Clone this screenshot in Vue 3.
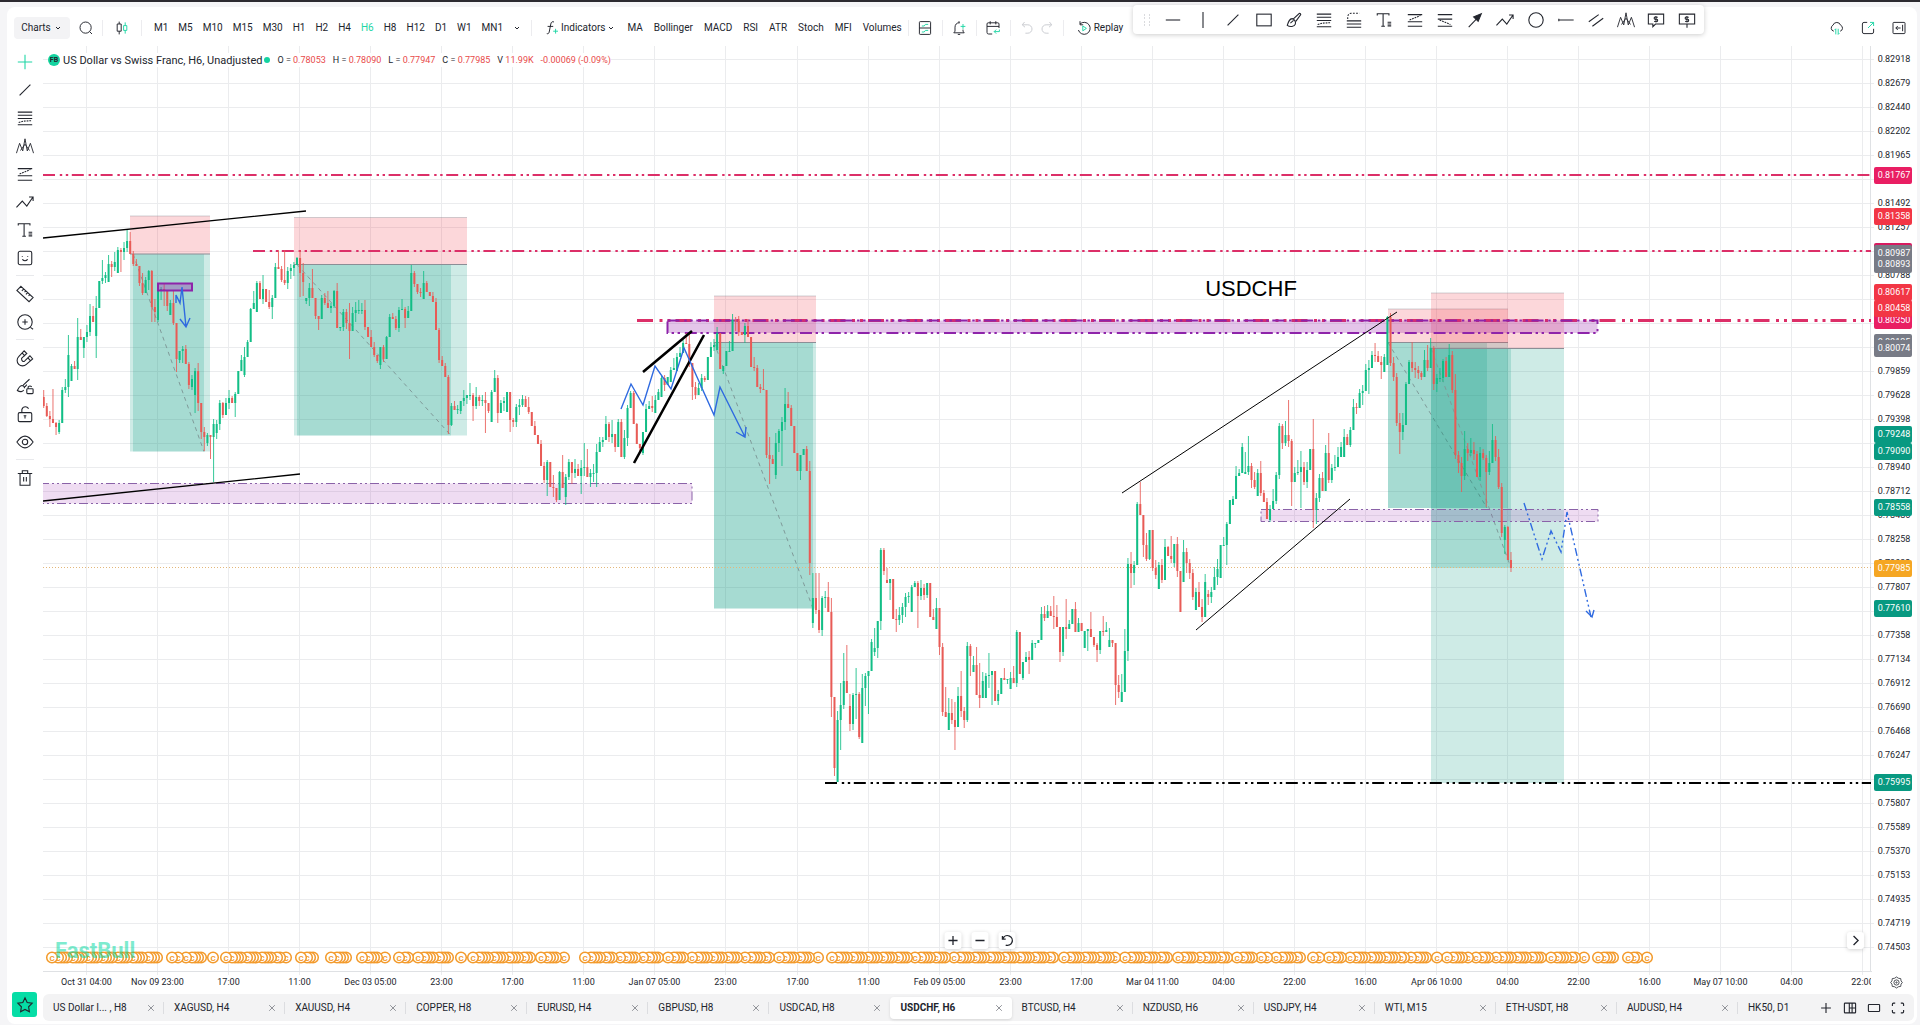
<script setup>
import { ref } from "vue";

const activeFrame = ref("H6");
const activeTab = ref("USDCHF, H6");

const frames = ["M1", "M5", "M10", "M15", "M30", "H1", "H2", "H4", "H6", "H8", "H12", "D1", "W1", "MN1"];
const studies = ["MA", "Bollinger", "MACD", "RSI", "ATR", "Stoch", "MFI", "Volumes"];

const tabs = [
  "US Dollar I... , H8", "XAGUSD, H4", "XAUUSD, H4", "COPPER, H8", "EURUSD, H4",
  "GBPUSD, H8", "USDCAD, H8", "USDCHF, H6", "BTCUSD, H4", "NZDUSD, H6",
  "USDJPY, H4", "WTI, M15", "ETH-USDT, H8", "AUDUSD, H4", "HK50, D1",
];

const quote = [
  { label: "O =", value: "0.78053" },
  { label: "H =", value: "0.78090" },
  { label: "L =", value: "0.77947" },
  { label: "C =", value: "0.77985" },
  { label: "V", value: "11.99K" },
  { label: "", value: "-0.00069 (-0.09%)" },
];

// Icon shapes, all on a 20x20 box
const G = 'stroke="#1fd6a5"';
const icons = {
  chevron: '<path d="M6 8l4 4 4-4"/>',
  search: '<circle cx="9.5" cy="9.5" r="7"/><path d="M14.500 14.500l3 3"/>',
  candles: `<path d="M6.500 2v3M6.500 14v4M4 5h5v9H4z"/><path ${G} d="M14 3v4M14 13v4M12 7h4v6h-4z"/>`,
  fx: `<path d="M12.500 2.500c-2-1-3.500 0-4 2.500L6.500 15c-.5 2-1.500 2.500-3 2M4.500 8h7"/><path ${G} d="M14.500 11v6M11.500 14h6"/>`,
  layout: `<rect x="3" y="2" width="14" height="16" rx="1"/><path d="M3 10h14"/><path ${G} d="M6 7.500h3l1.500-2H14M6 15h3l1.500-2H14"/>`,
  bell: `<path d="M11 3.500C7 3 5 6 5 9v5l-1.500 2h13L15 14v-2M8.500 18h3M10 1.500v2"/><path ${G} d="M15 5v6M12 8h6"/>`,
  calendar: `<path d="M9 17.500H4.500q-2 0-2-2V5q0-1.500 1.500-1.500h12q1.500 0 1.500 1.500v5M2.500 8h15M6.500 1.500v4M13.500 1.500v4"/><path ${G} d="M18 14.500h-6.500M14 12l-2.500 2.500L14 17M18 12v2.500"/>`,
  undo: '<path d="M7 2.500L4 6l3.500 3M4.500 6H11a5 5 0 0 1 0 10.500H8"/>',
  redo: '<path d="M13 2.500L16 6l-3.500 3M15.500 6H9a5 5 0 0 0 0 10.500h3"/>',
  replay: `<path d="M5 5A7.500 7.500 0 1 1 3 12.500M5 1.500V6h4"/><path ${G} d="M8.500 7.500l4.500 3-4.500 3z"/>`,
  cloud: `<path d="M6 14a4 4 0 0 1-1-7.500 5 5 0 0 1 9.500 0A4 4 0 0 1 14 14"/><path ${G} d="M8.500 18v-7L7 12.500M11.500 11v7l1.500-1.500"/>`,
  share: `<path d="M9 3H5q-2 0-2 2v10q0 2 2 2h10q2 0 2-2v-4"/><path ${G} d="M10 10l7-7M12.500 3H17v4.500"/>`,
  collapse: '<rect x="2.500" y="3" width="15" height="14" rx="1"/><path d="M14.500 6v8M12 10H6M8.500 7.500L6 10l2.500 2.500"/>',
  cross: `<path ${G} d="M10 2v16M2 10h16"/>`,
  line: '<path d="M4 16L16 4"/>',
  hline: '<path d="M2 10h16"/>',
  vline: '<path d="M10 1v18"/>',
  rect: '<rect x="2" y="3.500" width="16" height="13"/>',
  brush: '<path d="M9 9l7-6.500q1.500 0 1.500 1.500L12 11.500M8 8.500c-3 0-4 3-5.500 7.500 3 2 8 1.500 9-1.500.8-2.500-1-5.500-3.500-6zM6 13.500l3.500-3"/>',
  fib: '<path d="M2 3.500h16M2 7h16M2 10.500h16M2 17.500h16"/><path stroke-dasharray="2 1" d="M3 15l5-1.500 9-.5"/>',
  fibext: '<path d="M2 11h16M2 14.500h16M2 18h16"/><path stroke-dasharray="2 1.500" d="M3 9V6q1-3.500 4-3.500h9"/>',
  text: '<path d="M2.500 5V3h13v2M9 3v14M7 17h4M14 12.500h4M14 14.500h4M14 16.500h4"/>',
  channelup: '<path d="M2 4h16M2 12h16M2 17h16"/><path stroke-dasharray="2 1" d="M4 10l12-5"/>',
  channeldn: '<path d="M2 4h16M2 9h16M2 17h16"/><path stroke-dasharray="2 1" d="M4 10l12 5"/>',
  arrow: '<path d="M3 18l9-9.500"/><path fill="currentColor" d="M17 3l-8.500 3.500 5 5z"/>',
  zigzag: '<path d="M.5 16l6.500-7 5 5.500 6.500-9.500M14.500 4.500h4.500V9"/>',
  circle: '<circle cx="10" cy="10" r="8"/>',
  segment: '<path d="M1.500 10h17M2 8.500v3"/>',
  parallel: '<path d="M2 12L13 4M6 17l12-9"/>',
  waves: '<path stroke-width="1" d="M.5 18L4 7l3.500 8.500L10 2l2.500 13.500L16 7l3.500 11M5 15l5-7 5 7"/>',
  note: '<path d="M1.500 3.500h17v11h-9l-3 3v-3h-5zM12 7q-4-1-4 .8T10 9.200t1.800 1.600T8 11.300M10 5.500v7"/>',
  pin: '<path d="M1.500 3.500h17v11h-17zM10 14.500v4M12 7q-4-1-4 .8T10 9.200t1.800 1.600T8 11.300M10 5.500v7"/>',
  sticker: '<rect x="2.500" y="2.500" width="15" height="15" rx="2"/><path d="M7 8v1M13 8v1M7 11.500q3 3 6 0"/>',
  ruler: '<path d="M5.500 1.500L19 14l-4.500 4.500L1 6zM8.500 4.500l-2 2M11 6.500L9.500 8M13 8.500l-2 2M15.500 10.500L14 12"/>',
  zoom: '<circle cx="10" cy="10" r="8"/><path d="M16 16l3 2M10 7v6M7 10h6"/>',
  magnet: '<path d="M9 2L3 8.500a6 6 0 0 0 8.500 8.500L18.500 11l-3-3.500-6 6q-2 1-3-1t.5-3L12 5zM7 4.500L10 8M13 9.500l3 3.500"/>',
  brushlock: '<path d="M8 9l7-6.500M10 11l2-2.500M7 9.500c-3 0-4 2.500-5.500 5.500 3 2 6 1.500 7-.5M7 9.500q2.500.5 2.500 3"/><rect x="12" y="13" width="7" height="5.500" rx="1"/><path d="M13.500 13v-2q2-2 4 0"/>',
  lock: '<rect x="2.500" y="8.500" width="15" height="10" rx="1.500"/><path d="M6.500 8.500V5q1-3 4-3 2 0 3.500 2M10 12v3M8.500 12h3"/>',
  eye: '<path d="M1 10q9-13 18 0-9 13-18 0z"/><circle cx="10" cy="10" r="3"/>',
  trash: '<path d="M2 5h16M7 5V2h6v3M4.500 5v13h11V5M8.500 9v5M11.500 9v5"/>',
  star: '<path d="M10 2l2.400 5.200 5.600.800-4 4 .9 5.600-4.900-2.700-4.900 2.700.9-5.600-4-4 5.600-.8z"/>',
  plus: '<path d="M10 3v14M3 10h14"/>',
  minus: '<path d="M3 10h14"/>',
  reset: '<path d="M4 6.500A7.500 7.500 0 1 1 8 17M3 3v5h5"/>',
  next: '<path d="M7 3l7 7-7 7"/>',
  close: '<path d="M3 3l14 14M17 3L3 17"/>',
  split: '<rect x="2" y="3" width="16" height="14" rx="1"/><path d="M9 3v14M9 10h9M13 3v14"/>',
  single: '<rect x="2" y="5" width="16" height="10" rx="1"/>',
  expand: '<path d="M2 7V4.500Q2 3 3.500 3H6M14 3h2.500Q18 3 18 4.500V7M18 13v2.500q0 1.500-1.500 1.500H14M6 17H3.500Q2 17 2 15.500V13"/>',
  gear: '<path d="M10 1.500l3 2 3.500.500.500 3.500 2 2.500-2 2.500-.5 3.500-3.500.500-3 2-3-2-3.500-.5-.5-3.500-2-2.500 2-2.500.5-3.500 3.500-.5z"/><circle cx="10" cy="10" r="4"/><circle cx="10" cy="10" r="1"/>',
};

const favourites = [
  "hline", "vline", "line", "rect", "brush", "fib", "fibext", "text", "channelup", "channeldn",
  "arrow", "zigzag", "circle", "segment", "parallel", "waves", "note", "pin",
];
const sideTools = [
  ["cross", "line", "fib", "waves", "channelup", "zigzag", "text", "sticker"],
  ["ruler", "zoom"],
  ["magnet", "brushlock", "lock", "eye"],
  ["trash"],
];

// Price scale: one label every 24 units, starting at 59
const prices = [
  "0.82918", "0.82679", "0.82440", "0.82202", "0.81965", "0.81729", "0.81492", "0.81257",
  "0.81022", "0.80788", "0.80555", "0.80322", "0.80090", "0.79859", "0.79628", "0.79398",
  "0.79169", "0.78940", "0.78712", "0.78485", "0.78258", "0.78032", "0.77807", "0.77582",
  "0.77358", "0.77134", "0.76912", "0.76690", "0.76468", "0.76247", "0.76027", "0.75807",
  "0.75589", "0.75370", "0.75153", "0.74935", "0.74719", "0.74503",
].map((text, i) => ({ text, y: 59.5 + i * 24 }));

const times = [
  "Oct 31 04:00", "Nov 09 23:00", "17:00", "11:00", "Dec 03 05:00", "23:00", "17:00", "11:00",
  "Jan 07 05:00", "23:00", "17:00", "11:00", "Feb 09 05:00", "23:00", "17:00", "Mar 04 11:00",
  "04:00", "22:00", "16:00", "Apr 06 10:00", "04:00", "22:00", "16:00", "May 07 10:00",
  "04:00", "22:00",
].map((text, i) => ({ text, x: Math.round(86 + i * 71.05) + 0.5 }));

const tags = [
  { y: 175, text: "0.81767", color: "#e91e63" },
  { y: 216, text: "0.81358", color: "#f23645" },
  { y: 251, text: "", color: "#d81b60" },
  { y: 253, text: "0.80987", color: "#787b86" },
  { y: 264, text: "0.80893", color: "#787b86" },
  { y: 320, text: "0.80350", color: "#e91e63" },
  { y: 292, text: "0.80617", color: "#f23645" },
  { y: 308, text: "0.80458", color: "#f23645" },
  { y: 342, text: "0.80135", color: "#787b86" },
  { y: 348, text: "0.80074", color: "#787b86" },
  { y: 434, text: "0.79248", color: "#089981" },
  { y: 451, text: "0.79090", color: "#089981" },
  { y: 507, text: "0.78558", color: "#089981" },
  { y: 568, text: "0.77985", color: "#f5a623" },
  { y: 608, text: "0.77610", color: "#089981" },
  { y: 782, text: "0.75995", color: "#089981" },
];

// Short positions: x1/x2 outer box, stop/entry/target levels, and the part already played
const positions = [
  { x1: 130, x2: 210, stop: 216, entry: 254, target: 451.5, a: 133, b: 204, end: 451.5 },
  { x1: 294, x2: 467, stop: 217.5, entry: 264.5, target: 435.5, a: 297, b: 451, end: 435.5 },
  { x1: 714, x2: 816, stop: 296, entry: 342.5, target: 608.5, a: 714, b: 813, end: 608.5 },
  { x1: 1388, x2: 1508, stop: 309, entry: 342.5, target: 508, a: 1388, b: 1487, end: 508 },
  { x1: 1431, x2: 1564, stop: 293, entry: 348.5, target: 783, a: 1431, b: 1511, end: 568 },
];

// Each bar: close, upper wick, lower wick and, after a gap, its own open
const bars = `
406,7,2,397 416,3,1 419,5,8 423,30,0 427,1,8 423,3,2,432 390,3,0 387,8,3 355,20,10 366,2,0,381
369,5,0 337,19,11 340,8,0 337,0,10,348 332,7,5 316,12,4 322,10,0 308,12,22,336 281,0,0 278,18,3
275,3,5 264,9,0,282 267,3,10 262,10,4 250,3,0,273 252,2,20 248,6,8 241,12,4 254,9,0 264,3,2
266,5,0 283,0,3 293,10,2 280,3,0 271,1,10 307,1,15 312,8,10 290,2,2,320 289,2,10 291,5,15
306,0,5 303,3,0,315 323,12,2 359,0,13 351,0,3,360 349,3,12 364,4,0 385,2,4 379,4,3,387 371,3,18,395
403,8,8 432,0,7 437,5,14 435,2,3,443 437,0,22 424,5,45,437 424,4,6,433 403,3,6 415,1,3 403,5,0
398,8,6 403,2,0 394,2,14 371,0,0 360,5,0 357,10,2,375 342,2,0 309,1,0 303,12,0 283,2,0,312
299,2,0 289,14,5 302,0,0 307,12,2 298,3,12 267,4,0 269,17,0 280,3,2 283,30,2 271,4,6
268,4,8 265,3,8 258,1,0 273,8,24 282,10,14 298,0,3,301 288,5,8 298,19,0 316,0,3 319,0,11
298,3,0 303,5,2 308,12,0 306,3,5 291,1,2 328,8,0 327,0,3 312,3,4 323,3,6 331,20,28
313,6,0 310,8,9 310,10,3 310,7,3 327,10,3 337,0,0 347,7,0 355,5,2 361,0,2 347,0,4,365
359,2,3 337,1,0 317,3,0 319,4,0 328,3,2 310,3,4 309,10,0 318,2,10 311,5,0 273,8,0
284,2,3 292,0,2 293,4,4 283,12,0,299 292,2,0 296,0,0 302,4,0 330,4,0 360,2,3 366,4,0
377,3,0 425,2,9 406,3,1 410,5,0 409,4,4 401,0,3,411 398,8,5 395,0,6 395,12,4 406,2,15
397,10,3 401,2,5 400,5,5 403,8,30 411,0,2 392,2,0,422 378,8,0 413,3,10 403,3,0,413 401,4,8
392,0,0,412 420,0,12 422,2,5 407,3,5 405,6,8 399,4,2 407,3,0 412,10,2 426,0,0 435,5,0
444,0,0 466,4,0 480,4,3 462,2,16 487,0,0 488,12,9 500,0,2 472,1,0 488,17,0 477,3,8,497
462,3,3 473,0,11 469,10,5 476,5,0 468,8,18 467,24,8 477,18,0 473,4,10 473,9,8 452,8,14
442,5,0 440,3,5 424,8,0 437,2,5 434,14,6 447,0,5 422,3,0 457,3,0 438,8,2 408,3,8
393,2,0 424,2,0 444,1,0 448,0,5 432,0,2,453 409,5,0 406,5,0 408,10,4 400,5,0,413 392,3,0
378,2,0,397 385,3,6 377,0,0 370,3,0,382 368,10,0 357,4,0,371 353,6,0 343,3,0 344,10,0 363,12,4
387,0,13 395,5,4 388,5,0 378,4,3 380,2,2 357,0,0 347,5,0 345,6,4 333,6,0,350 369,0,0
366,0,3,371 351,0,0 351,10,0 320,6,0 321,3,10 332,5,4 335,0,0 326,3,8 337,7,0 367,0,0
368,10,3 387,3,0 389,3,4 390,20,0 455,0,3 459,18,25 464,4,0 443,10,4,475 431,2,9 422,5,35
404,16,8 408,12,0 426,3,0 453,0,0 471,0,0 455,0,9 449,0,0 471,3,0 563,10,12 598,25,5,623
610,25,4 630,37,3 598,2,6 597,6,10 612,15,0 697,14,20 768,0,8 720,9,0,782 705,22,30 681,28,4
693,36,0 724,12,7,706 695,2,6 694,26,24 737,2,2 688,14,0,743 676,3,18 671,0,38 642,3,0 648,20,4,652
621,0,10 550,2,9 571,2,4 583,12,0,580 579,0,17 619,0,0 620,10,12 615,8,5 607,4,8 597,4,10
596,4,6 587,2,0,612 583,2,0 596,2,32 588,8,4 595,4,5 583,0,3 617,0,0 620,8,0 608,10,0,629
647,0,8 712,4,4 717,25,0 713,15,0,730 720,14,4 727,18,23 696,9,0 711,25,6 720,4,8 646,4,2
656,2,20 665,9,0,672 695,18,0 698,32,10 681,9,0 676,3,0,698 675,22,12 671,0,30 701,0,0 694,4,4
678,0,0 680,10,0 679,0,4 678,6,0,689 683,12,0 632,2,4 674,0,0 662,0,2,678 657,5,0 660,6,14
643,3,0 643,0,4 640,0,0 614,7,0 618,8,3 611,6,0 616,5,0 617,20,12 627,12,0 652,0,10
627,0,4 629,28,10 624,4,0 609,0,0 632,7,0 623,5,0 631,0,0 631,0,0,648 629,0,20 637,17,0
645,0,2 650,2,12 631,0,4 632,15,4 630,8,0 640,12,0,647 643,0,4 685,0,20 692,10,6 692,18,0,702
651,22,0 564,6,10 573,12,15 565,4,12 504,2,0 515,22,0 545,0,12 559,12,2 530,0,1 568,0,3
575,8,4 565,3,0,589 580,6,3 547,8,0 556,1,0 559,20,4 544,0,4,563 571,7,6 612,0,0 552,12,0,582
563,4,10 573,4,6 597,4,3 592,4,0,610 607,10,0 617,8,5 582,8,0 597,4,8,594 592,5,6 577,10,0,590
569,10,8 545,0,0,578 545,8,0 524,2,20 500,0,0 499,3,0,505 476,10,0 473,4,0 447,4,0 472,20,0,474
466,30,3 480,3,8 487,8,2 473,4,0,496 493,12,3 502,3,0 519,4,0 509,4,2,520 501,12,0 475,3,3
426,3,4 443,2,6 435,14,3 441,35,6 482,2,24 473,6,0 472,12,2 467,16,36 482,5,3 470,8,6
449,0,0 510,30,18 498,5,14 478,4,4 491,6,0 453,8,0 480,20,3 468,4,3 467,12,3 457,10,0
447,5,0 437,8,0,457 445,3,0 430,3,2 407,8,0 408,4,6 393,4,0 391,6,12 370,6,0 368,8,24
355,4,0 356,12,6 362,5,0 365,6,14 357,3,0,372 317,1,0,365 363,4,3 377,6,4 423,4,3 432,10,22
425,12,8 384,2,0 362,2,0 368,20,4 370,6,8 373,4,6 377,2,3 360,10,0 368,15,3 348,10,0
384,2,6 378,4,8 378,10,3 361,2,4 377,4,0 355,11,0 390,4,3 455,16,4 463,4,10 476,6,16
449,18,4 453,6,8 450,12,3 454,8,6 477,3,0 453,6,4 458,4,2 472,3,35 463,12,3 440,16,0
457,4,4 487,8,2 533,4,4 527,2,14,540 560,1,0 568,8,4
`
  .trim()
  .split(/\s+/)
  .map((item) => item.split(",").map(Number));

const candles = bars.map(([close, up, down, gapOpen], i) => {
  const open = gapOpen || bars[i - 1][0];
  const top = Math.min(open, close);
  const bottom = Math.max(open, close, top + 1);
  return {
    x: 43.7 + i * 3.089,
    top,
    height: bottom - top,
    high: top - up,
    low: bottom + down,
    color: close <= open ? "#12be86" : "#e85b56",
  };
});

// Economic events along the bottom, drawn right to left so the first of a run stays on top
const eventRuns = [
  [52, 162], [172, 178], [186, 203], [213, 213], [226, 280], [286, 289], [301, 315], [331, 349],
  [362, 378], [385, 387], [399, 409], [418, 452], [461, 464], [473, 532], [541, 556], [564, 567],
  [585, 614], [620, 636], [643, 662], [668, 684], [692, 738], [745, 770], [779, 811], [818, 821],
  [832, 908], [915, 945], [954, 1055], [1064, 1115], [1125, 1168], [1178, 1193], [1200, 1229],
  [1237, 1254], [1261, 1269], [1276, 1300], [1313, 1319], [1329, 1343], [1350, 1404],
  [1411, 1427], [1437, 1438], [1447, 1469], [1476, 1489], [1496, 1541], [1551, 1577],
  [1584, 1589], [1598, 1613], [1628, 1637], [1647, 1647],
];
const events = eventRuns
  .flatMap(([from, to]) => {
    const list = [];
    for (let x = from; x <= to; x += list.length % 4 === 1 ? 6 : 3) list.push(x);
    return list;
  })
  .reverse();
</script>

<template>
  <div class="page">
    <div class="card">
      <header class="toolbar">
        <button class="charts">
          Charts
          <svg class="mini" viewBox="0 0 20 20" v-html="icons.chevron"></svg>
        </button>
        <button class="search" aria-label="Search">
          <svg class="icon" viewBox="0 0 20 20" v-html="icons.search"></svg>
        </button>
        <button class="style" aria-label="Chart type">
          <svg class="icon" viewBox="0 0 20 20" v-html="icons.candles"></svg>
        </button>
        <nav class="frames">
          <button v-for="f in frames" :key="f" :class="{ active: f === activeFrame }" @click="activeFrame = f">
            {{ f }}
          </button>
          <button aria-label="More intervals">
            <svg class="mini" viewBox="0 0 20 20" v-html="icons.chevron"></svg>
          </button>
        </nav>
        <nav class="studies">
          <button class="indicators">
            <svg class="icon" viewBox="0 0 20 20" v-html="icons.fx"></svg>
            Indicators
            <svg class="mini" viewBox="0 0 20 20" v-html="icons.chevron"></svg>
          </button>
          <button v-for="s in studies" :key="s">{{ s }}</button>
        </nav>
        <button v-for="n in ['layout', 'bell', 'calendar']" :key="n" class="action" :aria-label="n">
          <svg class="icon" viewBox="0 0 20 20" v-html="icons[n]"></svg>
        </button>
        <div class="history">
          <button aria-label="Undo"><svg class="icon" viewBox="0 0 20 20" v-html="icons.undo"></svg></button>
          <button aria-label="Redo"><svg class="icon" viewBox="0 0 20 20" v-html="icons.redo"></svg></button>
        </div>
        <button class="replay">
          <svg class="icon" viewBox="0 0 20 20" v-html="icons.replay"></svg>
          Replay
        </button>
        <div class="right">
          <button v-for="n in ['cloud', 'share', 'collapse']" :key="n" :aria-label="n">
            <svg class="icon" viewBox="0 0 20 20" v-html="icons[n]"></svg>
          </button>
        </div>
      </header>

      <div class="body">
        <aside class="side">
          <div v-for="(group, g) in sideTools" :key="g" class="group">
            <button v-for="n in group" :key="n" :aria-label="n">
              <svg class="icon large" viewBox="0 0 20 20" v-html="icons[n]"></svg>
            </button>
          </div>
        </aside>

        <main class="chart">
          <svg class="plot" viewBox="43 46 1874 946">
            <defs>
              <clipPath id="pane"><rect x="43" y="46" width="1828" height="946" /></clipPath>
            </defs>

            <g class="grid">
              <path v-for="p in prices" :key="p.text" :d="`M43 ${p.y}H1874`" />
              <path v-for="t in times" :key="t.x" :d="`M${t.x} 46V975`" />
              <path class="frame" d="M1870.500 46V971.500M43 971.500H1872" />
            </g>

            <g v-for="p in positions" :key="p.x1">
              <rect class="risk" :x="p.x1" :y="p.stop" :width="p.x2 - p.x1" :height="p.entry - p.stop" />
              <rect class="reward" :x="p.x1" :y="p.entry" :width="p.x2 - p.x1" :height="p.target - p.entry" />
              <rect class="reward" :x="p.a" :y="p.entry" :width="p.b - p.a" :height="p.end - p.entry" />
              <path class="entry" :d="`M${p.x1} ${p.entry}H${p.x2}`" />
              <path class="stop" :d="`M${p.x1} ${p.stop}H${p.x2}`" />
              <path class="progress" :d="`M${p.a} ${p.entry}L${p.b} ${p.end}`" />
            </g>

            <path class="last" d="M43 567.500H1871" />

            <rect class="soft" x="40" y="483.500" width="652" height="20" />
            <rect class="soft" x="1261" y="509.500" width="337" height="12" />

            <path class="level" d="M43 175H1871M253 251H1871" />
            <path class="level heavy" d="M637 320.500H1871" />
            <rect class="strong" x="667.500" y="320.500" width="930" height="12.500" />
            <path class="floor" d="M825 783H1871" />

            <g v-for="c in candles" :key="c.x" :fill="c.color">
              <rect :x="c.x - 0.5" :y="c.high" width="1" :height="c.low - c.high" opacity="0.85" />
              <rect :x="c.x - 1" :y="c.top" width="2" :height="c.height" />
            </g>

            <rect class="box" x="158" y="283.500" width="34" height="7" />

            <path class="trend" d="M43 238L306 211M43 501L300 474" />
            <path class="trend thick" d="M643 372L692 331M634 463L704 335" />
            <path class="trend thin" d="M1122 493L1397 312M1196 630L1350 499" />

            <path class="plan" d="M176 303V295L180 303L182 287L186 327M180 319L186 327L190 318" />
            <path class="plan" d="M621 409L631 384L643 405L655 366L671 389L684 348L714 415L720 387L745 437M736 432L745 437L746 427" />
            <path class="plan dashed" d="M1524 503L1542 559L1551 531L1561 552L1567 512L1591 617" />
            <path class="plan" d="M1586 611L1592 617L1594 610" />

            <text class="note" x="1251" y="296">USDCHF</text>

            <g class="events">
              <g v-for="x in events" :key="x">
                <circle :cx="x" cy="957.500" r="5.3" />
                <text :x="x" y="960.500">C</text>
              </g>
            </g>
            <text class="brand" x="55" y="958">FastBull</text>

            <g class="scale" clip-path="url(#pane)">
              <text v-for="t in times" :key="t.x" :x="t.x" y="985">{{ t.text }}</text>
            </g>
            <g class="scale">
              <text v-for="p in prices" :key="p.text" x="1894" :y="p.y + 2.5">{{ p.text }}</text>
              <g v-for="t in tags" :key="t.y">
                <rect x="1874" :y="t.y - 8" width="38" height="17" rx="2" :fill="t.color" />
                <text class="light" x="1894" :y="t.y + 3">{{ t.text }}</text>
              </g>
            </g>
          </svg>

          <div class="legend">
            <span class="logo">FB</span>
            <span class="title">US Dollar vs Swiss Franc, H6, Unadjusted</span>
            <span class="dot"></span>
            <span v-for="q in quote" :key="q.value" class="quote">
              {{ q.label }} <b>{{ q.value }}</b>
            </span>
          </div>

          <div class="zoomer">
            <button v-for="n in ['plus', 'minus', 'reset']" :key="n" :aria-label="n">
              <svg class="small" viewBox="0 0 20 20" v-html="icons[n]"></svg>
            </button>
          </div>
          <button class="latest" aria-label="Go to latest bar">
            <svg class="small" viewBox="0 0 20 20" v-html="icons.next"></svg>
          </button>
          <button class="settings" aria-label="Scale settings">
            <svg class="small" viewBox="0 0 20 20" v-html="icons.gear"></svg>
          </button>
        </main>
      </div>

      <footer class="bottom">
        <button class="star" aria-label="Favourites">
          <svg class="icon large" viewBox="0 0 20 20" v-html="icons.star"></svg>
        </button>
        <div class="strip">
          <div v-for="t in tabs" :key="t" class="tab" :class="{ active: t === activeTab }">
            <button class="name" @click="activeTab = t">{{ t }}</button>
            <button v-if="t !== 'HK50, D1'" class="close" :aria-label="'Close ' + t">
              <svg viewBox="0 0 20 20" v-html="icons.close"></svg>
            </button>
          </div>
          <div class="stripTools">
            <button v-for="n in ['plus', 'split', 'single', 'expand']" :key="n" :aria-label="n">
              <svg class="small" viewBox="0 0 20 20" v-html="icons[n]"></svg>
            </button>
          </div>
        </div>
      </footer>
    </div>

    <div class="floating">
      <svg class="grip" viewBox="0 0 8 12">
        <path d="M1 1h1M6 1h1M1 4h1M6 4h1M1 8h1M6 8h1M1 11h1M6 11h1" />
      </svg>
      <button v-for="n in favourites" :key="n" :aria-label="n">
        <svg class="icon large" viewBox="0 0 20 20" v-html="icons[n]"></svg>
      </button>
    </div>
  </div>
</template>

<style>
body {
  background: #f5f5f7;
}
</style>

<style scoped>
.page {
  position: relative;
  box-sizing: border-box;
  border-top: 2px solid #2c2a30;
  padding: 5px 3px 2px 7px;
  background: #f5f5f7;
  color: #22252d;
  font-family: Roboto, "Liberation Sans", sans-serif;
  font-size: 10px;
}

.card {
  background: #fff;
  border-radius: 8px;
  padding-bottom: 3px;
}

button {
  border: 0;
  padding: 0;
  background: none;
  color: inherit;
  font: inherit;
  display: flex;
  align-items: center;
  justify-content: center;
  cursor: pointer;
  white-space: nowrap;
}

svg {
  fill: none;
  stroke: currentColor;
  stroke-width: 1.2;
}

.icon {
  width: 16px;
  height: 16px;
  flex: none;
}

.large {
  width: 18px;
  height: 18px;
}

.small {
  width: 13px;
  height: 13px;
}

.mini {
  width: 10px;
  height: 10px;
  stroke-width: 2;
}

/* Top toolbar */
.toolbar {
  box-sizing: border-box;
  display: flex;
  align-items: center;
  height: 39px;
  padding: 2px 10px 0 7px;
}

.charts {
  width: 56px;
  height: 22px;
  gap: 2px;
  border-radius: 4px;
  background: #f3f3f5;
}

.search {
  width: 32px;
}

.style {
  width: 40px;
}

.style,
.frames,
.action,
.history,
.replay {
  height: 16px;
}

.style,
.action,
.history {
  border-left: 1px solid #ececef;
}

.style {
  border-right: 1px solid #ececef;
}

.frames,
.studies {
  display: flex;
  align-items: center;
}

.frames {
  gap: 10px;
  padding: 0 9px 0 12px;
  border-right: 1px solid #ececef;
}

.frames .mini {
  margin-left: -1px;
}

.frames .active {
  color: #1fd6a5;
}

.studies {
  gap: 11px;
  padding: 0 6px 0 12px;
}

.indicators {
  gap: 1px;
}

.action {
  box-sizing: border-box;
  width: 34px;
}

.history {
  display: flex;
  gap: 4px;
  padding: 0 8px;
  color: #c9cbd0;
  border-right: 1px solid #ececef;
}

.replay {
  gap: 2px;
  padding-left: 12px;
}

.right {
  display: flex;
  gap: 15px;
  margin-left: auto;
}

/* Favourite drawing tools, floating above the toolbar */
.floating {
  position: absolute;
  top: 3px;
  left: 59%;
  box-sizing: border-box;
  display: flex;
  align-items: center;
  width: 571px;
  height: 29px;
  padding: 0 2px 0 10px;
  border-radius: 4px;
  background: #fff;
  box-shadow: 0 1px 5px rgba(0, 0, 0, 0.2);
}

.floating button {
  flex: 1;
  height: 29px;
}

.grip {
  width: 8px;
  height: 12px;
  margin-right: 7px;
  color: #b5b7bd;
  stroke-width: 1;
}

/* Left drawing tools */
.body {
  display: grid;
  grid-template-columns: 36px minmax(0, 1fr);
}

.side {
  padding-top: 2px;
}

.group {
  margin: 0 9px 4px;
  padding-bottom: 3px;
  border-bottom: 1px solid #e8e9ec;
}

.group:last-child {
  border: 0;
}

.group button {
  width: 18px;
  height: 28px;
}

/* Chart */
.chart {
  position: relative;
}

.plot {
  display: block;
  width: 100%;
  stroke: none;
}

.grid path {
  stroke: #ebecee;
  stroke-width: 1;
}

.grid .frame {
  stroke: #dfe1e4;
}

.risk {
  fill: rgba(242, 54, 69, 0.2);
}

.reward {
  fill: rgba(8, 153, 129, 0.2);
}

.entry,
.stop {
  stroke: #8b8e96;
  stroke-width: 1;
}

.stop {
  opacity: 0.4;
}

.progress {
  stroke: #7f9a99;
  stroke-width: 1;
  stroke-dasharray: 4 4;
}

.last {
  stroke: #e3b77a;
  stroke-width: 1;
  stroke-dasharray: 1 2;
}

.soft {
  fill: rgba(156, 39, 176, 0.16);
  stroke: #8a62a8;
  stroke-width: 1;
  stroke-dasharray: 9 3 2 3 2 3;
}

.strong {
  fill: rgba(156, 39, 176, 0.27);
  stroke: #8e24aa;
  stroke-width: 2;
  stroke-dasharray: 12 4.8 2.4 3.6 2.4 3.6;
}

.box {
  fill: rgba(156, 39, 176, 0.35);
  stroke: #8e24aa;
  stroke-width: 2;
}

.level,
.floor {
  stroke: #dc2f68;
  stroke-width: 2;
  stroke-dasharray: 12 4.8 2.4 3.6 2.4 3.6;
}

.heavy {
  stroke-width: 3;
  stroke-dasharray: 16 6.5 3 5 3 5;
}

.floor {
  stroke: #000;
}

.trend {
  stroke: #000;
  stroke-width: 1.4;
}

.trend.thick {
  stroke-width: 2.6;
}

.trend.thin {
  stroke-width: 1;
}

.plan {
  stroke: #2f6ae0;
  stroke-width: 1.4;
}

.plan.dashed {
  stroke-dasharray: 8 3 2 3 2 3;
}

.note {
  fill: #000;
  font-family: "Liberation Sans", Arial, sans-serif;
  font-size: 22px;
  text-anchor: middle;
}

.events circle {
  fill: #fff;
  stroke: #f39a2b;
  stroke-width: 1.5;
}

.events text {
  fill: #f39a2b;
  font-size: 8px;
  font-weight: 700;
  text-anchor: middle;
}

.brand {
  fill: #00d9a0;
  opacity: 0.5;
  font-size: 22px;
  font-weight: 700;
}

.scale text {
  fill: #22252d;
  font-size: 9px;
  text-anchor: middle;
}

.scale .light {
  fill: #fff;
}

.legend {
  position: absolute;
  top: 7px;
  left: 5px;
  display: flex;
  align-items: center;
  height: 14px;
  background: #fff;
  font-size: 9px;
  white-space: nowrap;
}

.logo {
  width: 12px;
  height: 12px;
  border-radius: 50%;
  background: #14d3a0;
  font-size: 7px;
  font-weight: 700;
  line-height: 12px;
  text-align: center;
}

.title {
  margin: 0 2px 0 3px;
  font-size: 11px;
}

.dot {
  width: 6px;
  height: 6px;
  border-radius: 50%;
  background: #14d3a0;
}

.quote {
  margin-left: 7px;
}

.quote b {
  color: #e84a4a;
  font-weight: 400;
}

.zoomer {
  position: absolute;
  bottom: 43px;
  left: 50%;
  display: flex;
  gap: 10px;
  transform: translateX(-50%);
}

.zoomer button,
.latest {
  width: 17px;
  height: 17px;
  border-radius: 3px;
  background: #fff;
  box-shadow: 0 1px 4px rgba(0, 0, 0, 0.18);
}

.zoomer .small,
.latest .small {
  stroke-width: 2;
}

.latest {
  position: absolute;
  right: 53px;
  bottom: 43px;
}

.settings {
  position: absolute;
  right: 14px;
  bottom: 3px;
}

/* Bottom tabs */
.bottom {
  display: flex;
  padding: 0 3px 0 5px;
}

.star {
  width: 25px;
  height: 25px;
  margin-right: 6px;
  border-radius: 3px;
  background: #06dda6;
}

.strip {
  flex: 1;
  min-width: 0;
  display: grid;
  grid-template-columns: repeat(14, minmax(0, 1fr)) 72px 104px;
  align-items: center;
  height: 27px;
  margin-top: 2px;
  border-radius: 6px;
  background: #f3f3f4;
}

.tab {
  display: flex;
  align-items: center;
  justify-content: space-between;
  height: 22px;
  padding: 0 9px 0 10px;
  border-radius: 4px;
}

.tab.active {
  background: #fff;
  box-shadow: 0 1px 3px rgba(0, 0, 0, 0.12);
  font-weight: 700;
}

.tab:not(.active) {
  background: linear-gradient(#dcdde0, #dcdde0) right center / 1px 12px no-repeat;
}

.tab:nth-child(7),
.tab:nth-child(15) {
  background: none;
}

.close svg {
  width: 8px;
  height: 8px;
  color: #777a82;
  stroke-width: 2;
}

.stripTools {
  display: flex;
  justify-content: space-between;
  padding: 0 9px;
}

.stripTools .small {
  width: 14px;
  height: 14px;
  stroke-width: 1.6;
}
</style>
